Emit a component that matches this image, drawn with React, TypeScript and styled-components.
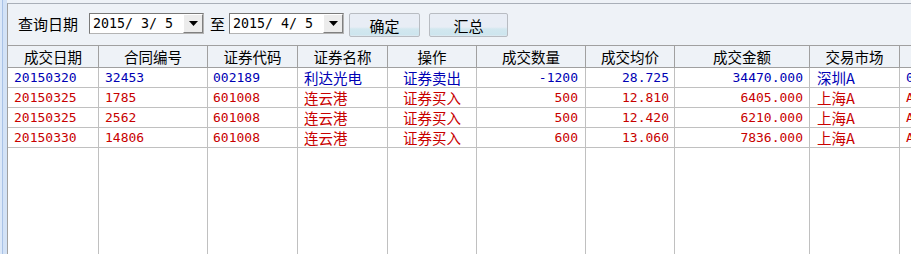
import React from "react";
import styled, { createGlobalStyle } from "styled-components";

const GlobalStyle = createGlobalStyle`
  html, body { margin: 0; padding: 0; }
  body {
    width: 911px;
    height: 254px;
    overflow: hidden;
    background: #eef2f7;
    font-family: "Noto Sans CJK SC", sans-serif;
  }
`;

const BLUE = "#0000b4";
const RED = "#c80000";

const Window = styled.div`
  display: flex;
  width: 911px;
  height: 254px;
  overflow: hidden;
`;

const Splitter = styled.div`
  flex: none;
  width: 7px;
  background: linear-gradient(
    to right,
    #dce8f8 0 2px,
    #a9c2e6 2px 3px,
    #d3e2f6 3px 7px
  );
`;

const Main = styled.div`
  flex: 1;
  min-width: 0;
  display: flex;
  flex-direction: column;
  margin-top: 3px;
  border-top: 1px solid #a9afb8;
  border-left: 1px solid #a0a0a0;
  overflow: hidden;
`;

const Toolbar = styled.div`
  flex: none;
  height: 41px;
  box-sizing: border-box;
  display: flex;
  align-items: flex-start;
  padding: 9px 0 0 10px;
  background: #eef2f7;
`;

const Label = styled.span<{ $ml?: number; $mr?: number }>`
  font-size: 15px;
  line-height: 21px;
  color: #000;
  white-space: nowrap;
  margin-left: ${(p) => p.$ml ?? 0}px;
  margin-right: ${(p) => p.$mr ?? 0}px;
`;

const Combo = styled.div`
  flex: none;
  width: 115px;
  height: 21px;
  box-sizing: border-box;
  display: flex;
  border: 1px solid #7a7a7a;
  border-right-color: #b4b4b4;
  border-bottom-color: #b4b4b4;
  background: #fff;
`;

const ComboText = styled.span`
  flex: 1;
  padding-left: 3px;
  font-family: "DejaVu Sans Mono", monospace;
  font-size: 13.3px;
  line-height: 19px;
  white-space: pre;
  color: #000;
`;

const ComboButton = styled.span`
  flex: none;
  width: 20px;
  height: 19px;
  box-sizing: border-box;
  display: flex;
  align-items: center;
  justify-content: center;
  border: 1px solid;
  border-color: #fff #808080 #808080 #fff;
  background: #ececec;
`;

const Button = styled.button<{ $w: number; $ml: number }>`
  flex: none;
  width: ${(p) => p.$w}px;
  height: 24px;
  margin-left: ${(p) => p.$ml}px;
  padding: 0;
  border: 1px solid #b8bcc2;
  border-radius: 2px;
  background: linear-gradient(
    to bottom,
    #e8edf5 0,
    #e8edf5 13px,
    #d2e7ef 15px,
    #cde5ee 21px,
    #e4eaf1 22px
  );
  font-family: "Noto Sans CJK SC", sans-serif;
  font-size: 15px;
  line-height: 21px;
  color: #000;
`;

const Grid = styled.div`
  flex: 1;
  display: flex;
  border-top: 1px solid #a0a0a0;
  background: #fff;
`;

const Column = styled.div<{ $w: number }>`
  flex: none;
  width: ${(p) => p.$w}px;
  display: flex;
  flex-direction: column;
`;

const HeaderCell = styled.div`
  height: 22px;
  box-sizing: border-box;
  border-right: 1px solid #a0a0a0;
  border-bottom: 1px solid #a0a0a0;
  background: #eef2f7;
  text-align: center;
  font-size: 14.5px;
  line-height: 21px;
  color: #000;
  white-space: nowrap;
  overflow: hidden;
`;

const ColumnBody = styled.div`
  flex: 1;
  border-right: 1px solid #c0c0c0;
`;

const Cell = styled.div<{
  $align: "left" | "center" | "right";
  $pad: number;
  $mono: boolean;
  $color: string;
}>`
  height: 20px;
  box-sizing: border-box;
  border-bottom: 1px solid #c0c0c0;
  text-align: ${(p) => p.$align};
  padding: ${(p) =>
    p.$align === "right" ? `0 ${p.$pad}px 0 0` : p.$align === "left" ? `0 0 0 ${p.$pad}px` : "0"};
  font-family: ${(p) =>
    p.$mono ? `"DejaVu Sans Mono", monospace` : `"Noto Sans CJK SC", sans-serif`};
  font-size: ${(p) => (p.$mono ? "13px" : "14.5px")};
  line-height: 19px;
  color: ${(p) => p.$color};
  white-space: nowrap;
  overflow: hidden;
`;

type Col = {
  title: string;
  width: number;
  align: "left" | "center" | "right";
  pad: number;
  mono: boolean;
};

const columns: Col[] = [
  { title: "成交日期", width: 91, align: "left", pad: 6, mono: true },
  { title: "合同编号", width: 109, align: "left", pad: 6, mono: true },
  { title: "证券代码", width: 90, align: "left", pad: 5, mono: true },
  { title: "证券名称", width: 90, align: "left", pad: 6, mono: false },
  { title: "操作", width: 89, align: "center", pad: 0, mono: false },
  { title: "成交数量", width: 109, align: "right", pad: 7, mono: true },
  { title: "成交均价", width: 89, align: "right", pad: 5, mono: true },
  { title: "成交金额", width: 135, align: "right", pad: 6, mono: true },
  { title: "交易市场", width: 90, align: "left", pad: 7, mono: false },
  { title: "股东代码", width: 120, align: "left", pad: 6, mono: true },
];

const rows: { color: string; values: string[] }[] = [
  {
    color: BLUE,
    values: ["20150320", "32453", "002189", "利达光电", "证券卖出", "-1200", "28.725", "34470.000", "深圳A", "0123456789"],
  },
  {
    color: RED,
    values: ["20150325", "1785", "601008", "连云港", "证券买入", "500", "12.810", "6405.000", "上海A", "A123456789"],
  },
  {
    color: RED,
    values: ["20150325", "2562", "601008", "连云港", "证券买入", "500", "12.420", "6210.000", "上海A", "A123456789"],
  },
  {
    color: RED,
    values: ["20150330", "14806", "601008", "连云港", "证券买入", "600", "13.060", "7836.000", "上海A", "A123456789"],
  },
];

const DownArrow = () => (
  <svg width="9" height="5" viewBox="0 0 9 5">
    <path d="M0 0h9L4.5 5z" fill="#000" />
  </svg>
);

const DateCombo = ({ value }: { value: string }) => (
  <Combo>
    <ComboText>{value}</ComboText>
    <ComboButton>
      <DownArrow />
    </ComboButton>
  </Combo>
);

export default function App() {
  return (
    <>
      <GlobalStyle />
      <Window>
        <Splitter />
        <Main>
          <Toolbar>
            <Label $mr={11}>查询日期</Label>
            <DateCombo value="2015/ 3/ 5" />
            <Label $ml={6} $mr={4}>至</Label>
            <DateCombo value="2015/ 4/ 5" />
            <Button $w={71} $ml={5}>确定</Button>
            <Button $w={79} $ml={9}>汇总</Button>
          </Toolbar>
          <Grid>
            {columns.map((col, ci) => (
              <Column key={col.title} $w={col.width}>
                <HeaderCell>{col.title}</HeaderCell>
                <ColumnBody>
                  {rows.map((row, ri) => (
                    <Cell
                      key={ri}
                      $align={col.align}
                      $pad={col.pad}
                      $mono={col.mono}
                      $color={row.color}
                    >
                      {row.values[ci]}
                    </Cell>
                  ))}
                </ColumnBody>
              </Column>
            ))}
          </Grid>
        </Main>
      </Window>
    </>
  );
}
